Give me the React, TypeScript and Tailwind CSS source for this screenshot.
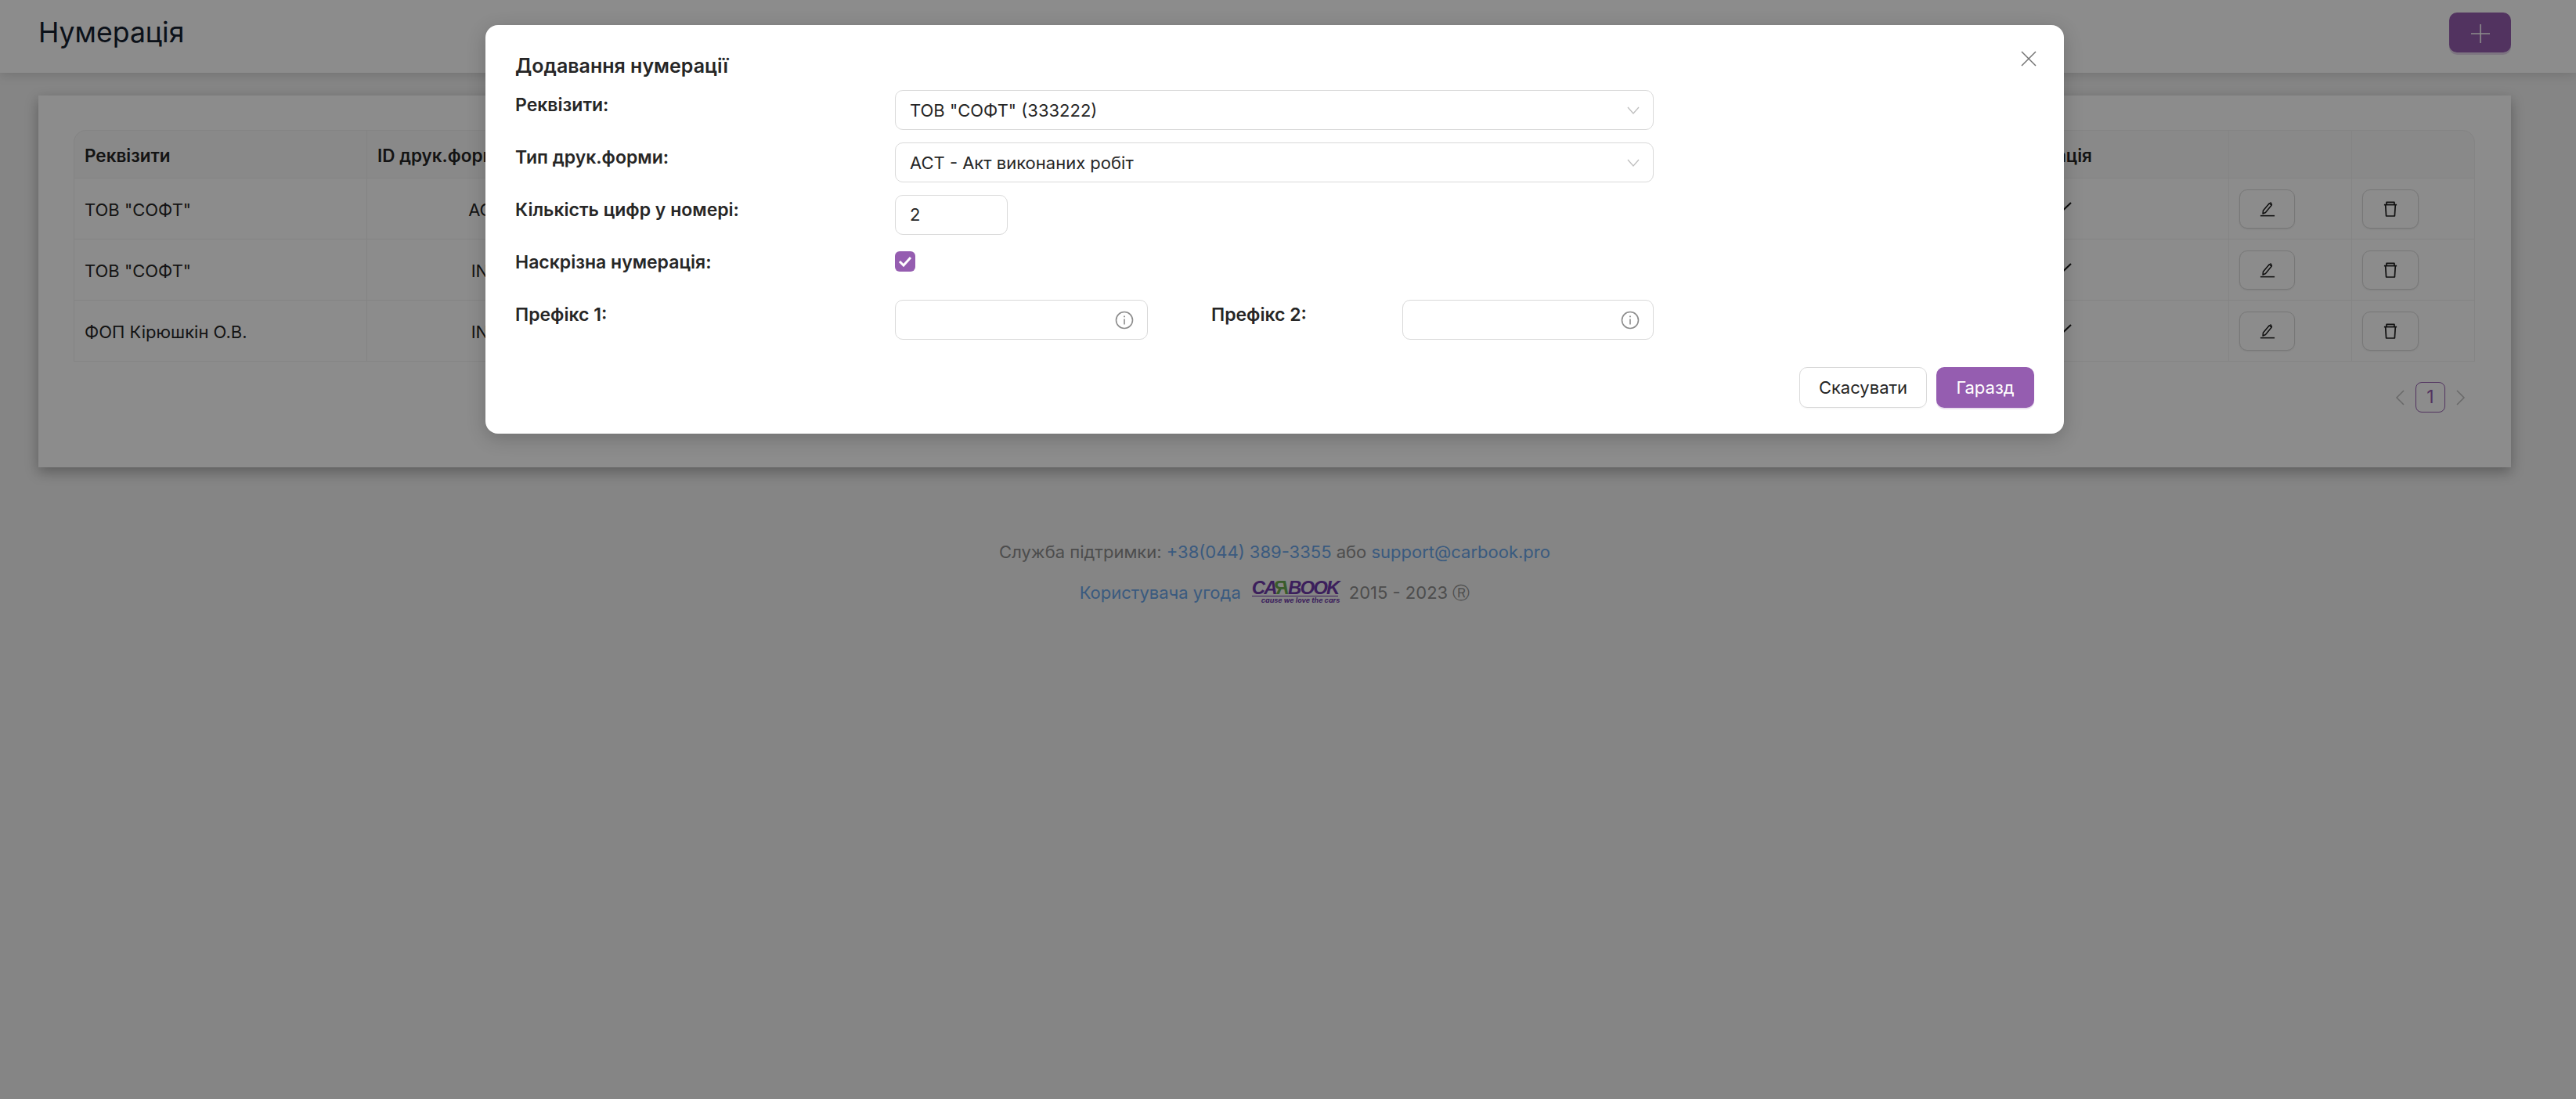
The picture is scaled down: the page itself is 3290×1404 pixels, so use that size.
import React from 'react'

const rows = [
  { name: 'ТОВ "СОФТ"', form: 'ACT' },
  { name: 'ТОВ "СОФТ"', form: 'INV' },
  { name: 'ФОП Кірюшкін О.В.', form: 'INV' },
]

const EditIcon = () => (
  <svg width="20" height="20" viewBox="0 0 22 22" fill="none" stroke="#1f1f1f" strokeWidth="1.7" strokeLinejoin="round">
    <path d="M1 20.5h20" />
    <path d="M4.5 17.5l.4-4.2L13.6 3l3.2 2.6-8.6 10.4z" />
    <path d="M15 1.5l2.2 3.6" />
  </svg>
)

const TrashIcon = () => (
  <svg width="18" height="20" viewBox="0 0 20 22" fill="none" stroke="#1f1f1f" strokeWidth="1.9" strokeLinejoin="round">
    <path d="M1 5h18" />
    <path d="M4.5 5V1.5h11V5" />
    <path d="M3 5l1 16h12l1-16" />
  </svg>
)

const Chevron = () => (
  <svg width="16" height="12" viewBox="0 0 16 12" fill="none" stroke="#bfbfbf" strokeWidth="1.3">
    <path d="M1 2l7 8 7-8" />
  </svg>
)

const InfoIcon = () => (
  <svg width="24" height="24" viewBox="0 0 24 24" fill="none" stroke="#8c8c8c">
    <circle cx="12" cy="12" r="10.5" strokeWidth="1.6" />
    <path d="M12 10.5v7" strokeWidth="1.6" />
    <path d="M12 6.5v1.8" strokeWidth="1.8" />
  </svg>
)

const Label = ({ children, className = 'w-[485px]' }: { children: React.ReactNode; className?: string }) => (
  <div className={`${className} shrink-0 pt-[3px] text-[23px] leading-[32px] font-semibold text-[#262626]`}>{children}</div>
)

const SelectBox = ({ value }: { value: string }) => (
  <div className="flex h-[51px] w-[969px] items-center justify-between rounded-[10px] border border-[#d9d9d9] bg-white pl-[18px] pr-[17px] pt-[1px] text-[22px] text-[#262626]">
    <span>{value}</span>
    <Chevron />
  </div>
)

const PrefixInput = ({ width }: { width: string }) => (
  <div className={`flex h-[51px] ${width} items-center justify-end rounded-[10px] border border-[#d9d9d9] bg-white pr-[17px]`}>
    <InfoIcon />
  </div>
)

export default function App() {
  return (
    <div className="relative h-[1404px] w-full overflow-hidden bg-[#f2f2f2] font-['Inter',sans-serif]">
      <header className="flex h-[93px] items-start justify-between bg-white pl-[49px] pr-[83px] shadow-[0_2px_14px_rgba(0,0,0,0.15)]">
        <h1 className="mt-[17px] text-[35.6px] leading-[50px] font-normal text-[#14202e]">Нумерація</h1>
        <button className="mt-[16px] flex h-[51px] w-[79px] items-center justify-center rounded-[10px] bg-[#955db0] pt-[3px] shadow-[0_3px_0_rgba(149,93,176,0.25)]">
          <svg width="24" height="24" viewBox="0 0 24 24" stroke="#fff" strokeWidth="1.6">
            <path d="M12 0v24M0 12h24" />
          </svg>
        </button>
      </header>

      <main className="pl-[49px] pr-[83px] pt-[29px]">
        <section className="h-[475px] bg-white px-[45px] pt-[44px] shadow-[0_6px_16px_rgba(0,0,0,0.3)]">
          <table className="w-[3067px] table-fixed border-separate border-spacing-0 text-[22px] text-[#262626]">
            <colgroup>
              <col className="w-[374px]" />
              <col className="w-[304px]" />
              <col className="w-[1646px]" />
              <col className="w-[428px]" />
              <col className="w-[157px]" />
              <col className="w-[158px]" />
            </colgroup>
            <thead>
              <tr className="h-[62px] bg-[#fafafa] text-left text-[22.5px]">
                <th className="rounded-tl-[16px] border-y border-l border-[#f0f0f0] px-[13px] pt-[3px] font-semibold">Реквізити</th>
                <th className="border-y border-l border-[#f0f0f0] px-[13px] pt-[3px] font-semibold">ID друк.форми</th>
                <th className="border-y border-[#f0f0f0]" />
                <th className="border-y border-[#f0f0f0] pl-[16px] pt-[3px] font-semibold">Наскрізна нумерація</th>
                <th className="border-y border-l border-[#f0f0f0]" />
                <th className="rounded-tr-[16px] border-y border-x border-[#f0f0f0]" />
              </tr>
            </thead>
            <tbody>
              {rows.map((row, i) => (
                <tr key={i} className="h-[78px]">
                  <td className="border-b border-l border-[#f0f0f0] px-[13px] pt-[4px]">{row.name}</td>
                  <td className="border-b border-l border-[#f0f0f0] px-[13px] pt-[4px] text-center">{row.form}</td>
                  <td className="border-b border-[#f0f0f0]" />
                  <td className="border-b border-[#f0f0f0] text-center">
                    <svg className="inline-block" width="30" height="24" viewBox="0 0 30 24" fill="none" stroke="#1a1a1a" strokeWidth="2.2">
                      <path d="M3 12l7 8L28 3" />
                    </svg>
                  </td>
                  <td className="border-b border-l border-[#f0f0f0] px-[13px]">
                    <button className="flex h-[50px] w-[71px] items-center justify-center rounded-[10px] border border-[#d9d9d9] bg-white shadow-[0_1px_2px_rgba(0,0,0,0.08)]">
                      <EditIcon />
                    </button>
                  </td>
                  <td className="border-b border-x border-[#f0f0f0] px-[13px]">
                    <button className="flex h-[50px] w-[72px] items-center justify-center rounded-[10px] border border-[#d9d9d9] bg-white shadow-[0_1px_2px_rgba(0,0,0,0.08)]">
                      <TrashIcon />
                    </button>
                  </td>
                </tr>
              ))}
            </tbody>
          </table>

          <div className="mt-[26px] flex items-center justify-end gap-[14px] pr-[13px] text-[#bfbfbf]">
            <svg width="12" height="20" viewBox="0 0 12 20" fill="none" stroke="currentColor" strokeWidth="1.5"><path d="M11 1L2 10l9 9" /></svg>
            <span className="flex h-[39px] w-[38px] items-center justify-center rounded-[8px] border border-[#955db0] text-[23px] text-[#955db0]">1</span>
            <svg width="12" height="20" viewBox="0 0 12 20" fill="none" stroke="currentColor" strokeWidth="1.5"><path d="M1 1l9 9-9 9" /></svg>
          </div>
        </section>

        <footer className="mt-[92px] text-center text-[22px] text-[#8c8c8c]">
          <p className="leading-[32px]">
            Служба підтримки: <a className="text-[#6aa5e8]">+38(044) 389-3355</a> або <a className="text-[#6aa5e8]">support@carbook.pro</a>
          </p>
          <div className="mt-[18px] flex h-[34px] items-center justify-center">
            <a className="pt-[2px] text-[#6aa5e8]">Користувача угода</a>
            <div className="ml-[14px] mr-[14px] flex w-[110px] flex-col items-stretch whitespace-nowrap">
              <span className="text-[24px] leading-[21px] font-bold italic tracking-[-1.9px] text-[#6e3aa8] font-['Liberation_Sans',sans-serif]">
                CA<span className="inline-block scale-x-[-1] text-[#6aa84f]">R</span>BOOK
              </span>
              <span className="border-t border-[#6e3aa8] pl-[12px] text-left text-[9px] leading-[10px] font-bold italic text-[#6e3aa8]">cause we love the cars</span>
            </div>
            <span className="pt-[2px]">2015 - 2023 <span className="font-['DejaVu_Sans',sans-serif]">Ⓡ</span></span>
          </div>
        </footer>
      </main>

      {/* Modal overlay */}
      <div className="absolute inset-0 flex justify-center bg-black/45 pr-[34px] pt-[32px]">
        <div className="relative h-[522px] w-[2016px] rounded-[16px] bg-white px-[38px] pt-[36px] shadow-[0_6px_24px_rgba(0,0,0,0.2)]">
          <button className="absolute right-[35px] top-[33px]">
            <svg width="20" height="20" viewBox="0 0 20 20" stroke="#737373" strokeWidth="1.5"><path d="M1 1l18 18M19 1L1 19" /></svg>
          </button>
          <h2 className="text-[25px] leading-[32px] font-semibold text-[#262626]">Додавання нумерації</h2>

          <div className="mt-[15px] flex">
            <Label>Реквізити:</Label>
            <SelectBox value={'ТОВ "СОФТ" (333222)'} />
          </div>
          <div className="mt-[16px] flex">
            <Label>Тип друк.форми:</Label>
            <SelectBox value="ACT - Акт виконаних робіт" />
          </div>
          <div className="mt-[16px] flex">
            <Label>Кількість цифр у номері:</Label>
            <div className="flex h-[51px] w-[144px] items-center rounded-[10px] border border-[#d9d9d9] pl-[18px] text-[22px] text-[#262626]">2</div>
          </div>
          <div className="mt-[21px] flex">
            <Label className="-mt-[5px] w-[485px]">Наскрізна нумерація:</Label>
            <span className="flex h-[26px] w-[26px] items-center justify-center rounded-[6px] bg-[#955db0]">
              <svg width="18" height="14" viewBox="0 0 18 14" fill="none" stroke="#fff" strokeWidth="3"><path d="M2 7l5 5 9-10" /></svg>
            </span>
          </div>
          <div className="mt-[32px] flex">
            <Label>Префікс 1:</Label>
            <PrefixInput width="w-[323px]" />
            <Label className="ml-[81px] w-[244px]">Префікс 2:</Label>
            <PrefixInput width="w-[321px]" />
          </div>

          <div className="mt-[35px] flex justify-end gap-[12px] text-[22px]">
            <button className="h-[52px] w-[163px] rounded-[10px] border border-[#d9d9d9] bg-white text-[#262626] shadow-[0_2px_0_rgba(0,0,0,0.02)]">Скасувати</button>
            <button className="h-[52px] w-[125px] rounded-[10px] bg-[#955db0] text-white shadow-[0_2px_0_rgba(149,93,176,0.2)]">Гаразд</button>
          </div>
        </div>
      </div>
    </div>
  )
}
